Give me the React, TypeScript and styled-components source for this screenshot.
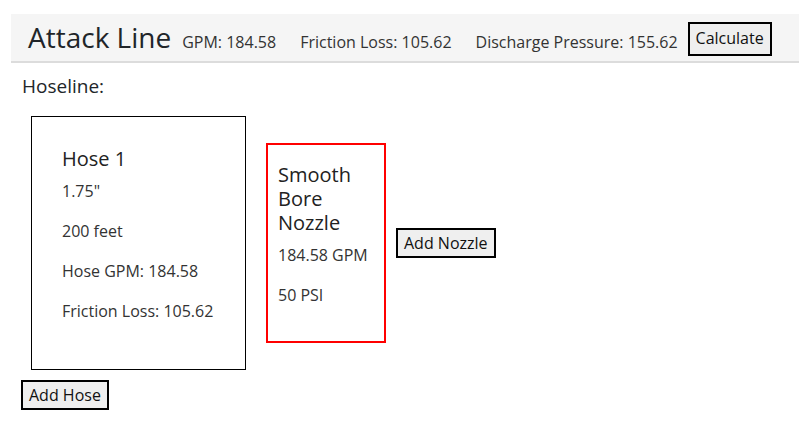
import React from "react";
import styled, { createGlobalStyle } from "styled-components";

const Global = createGlobalStyle`
  body {
    margin: 0;
    font-family: "Open Sans", "Noto Sans", sans-serif;
    color: #212529;
    background: #fff;
  }
`;

const Page = styled.div`
  padding: 14px 0 0 11px;
`;

const Header = styled.header`
  display: flex;
  align-items: baseline;
  height: 47px;
  padding-left: 17px;
  background: #f5f5f5;
  border-bottom: 2px solid #dcdcdc;
  box-sizing: content-box;
`;

const Title = styled.h1`
  margin: 0;
  font-size: 28px;
  font-weight: 400;
  line-height: 47px;
  margin-right: 11px;
`;

const Stat = styled.span`
  font-size: 16px;
  margin-right: 24px;
  color: #333;

  &:last-of-type {
    margin-right: 10px;
  }
`;

const Button = styled.button`
  font-family: inherit;
  font-size: 16px;
  color: #111;
  background: #efefef;
  border: 2px solid #000;
  padding: 1px 6px;
  line-height: 24px;
  cursor: pointer;
`;

const HeaderButton = styled(Button)`
  align-self: center;
  padding: 2px 6px 4px;
  margin-top: 2px;
`;

const Section = styled.div`
  padding: 10px 0 0 11px;
`;

const SectionLabel = styled.div`
  font-size: 19px;
  line-height: 26px;
  margin-bottom: 17px;
`;

const Row = styled.div`
  display: flex;
  align-items: center;
  padding-left: 20px;
`;

const Card = styled.div<{ $accent?: boolean }>`
  border: ${(p) => (p.$accent ? "2px solid #f00" : "1px solid #000")};
  box-sizing: border-box;
`;

const HoseCard = styled(Card)`
  width: 215px;
  height: 254px;
  padding: 30px 30px;
  margin-right: 20px;
`;

const NozzleCard = styled(Card)`
  width: 120px;
  height: 200px;
  padding: 18px 10px;
  margin-right: 10px;
`;

const CardTitle = styled.h3`
  margin: 0 0 8px;
  font-size: 20px;
  font-weight: 400;
  line-height: 24px;
  color: #222;
`;

const CardLine = styled.p`
  margin: 0 0 16px;
  font-size: 16px;
  line-height: 24px;
  color: #333;
`;

const Footer = styled.div`
  padding: 10px 0 0 10px;
`;

export default function App() {
  return (
    <>
      <Global />
      <Page>
        <Header>
          <Title>Attack Line</Title>
          <Stat>GPM: 184.58</Stat>
          <Stat>Friction Loss: 105.62</Stat>
          <Stat>Discharge Pressure: 155.62</Stat>
          <HeaderButton>Calculate</HeaderButton>
        </Header>
        <Section>
          <SectionLabel>Hoseline:</SectionLabel>
        </Section>
        <Row>
          <HoseCard>
            <CardTitle>Hose 1</CardTitle>
            <CardLine>1.75"</CardLine>
            <CardLine>200 feet</CardLine>
            <CardLine>Hose GPM: 184.58</CardLine>
            <CardLine>Friction Loss: 105.62</CardLine>
          </HoseCard>
          <NozzleCard $accent>
            <CardTitle>Smooth Bore Nozzle</CardTitle>
            <CardLine>184.58 GPM</CardLine>
            <CardLine>50 PSI</CardLine>
          </NozzleCard>
          <Button>Add Nozzle</Button>
        </Row>
        <Footer>
          <Button>Add Hose</Button>
        </Footer>
      </Page>
    </>
  );
}
